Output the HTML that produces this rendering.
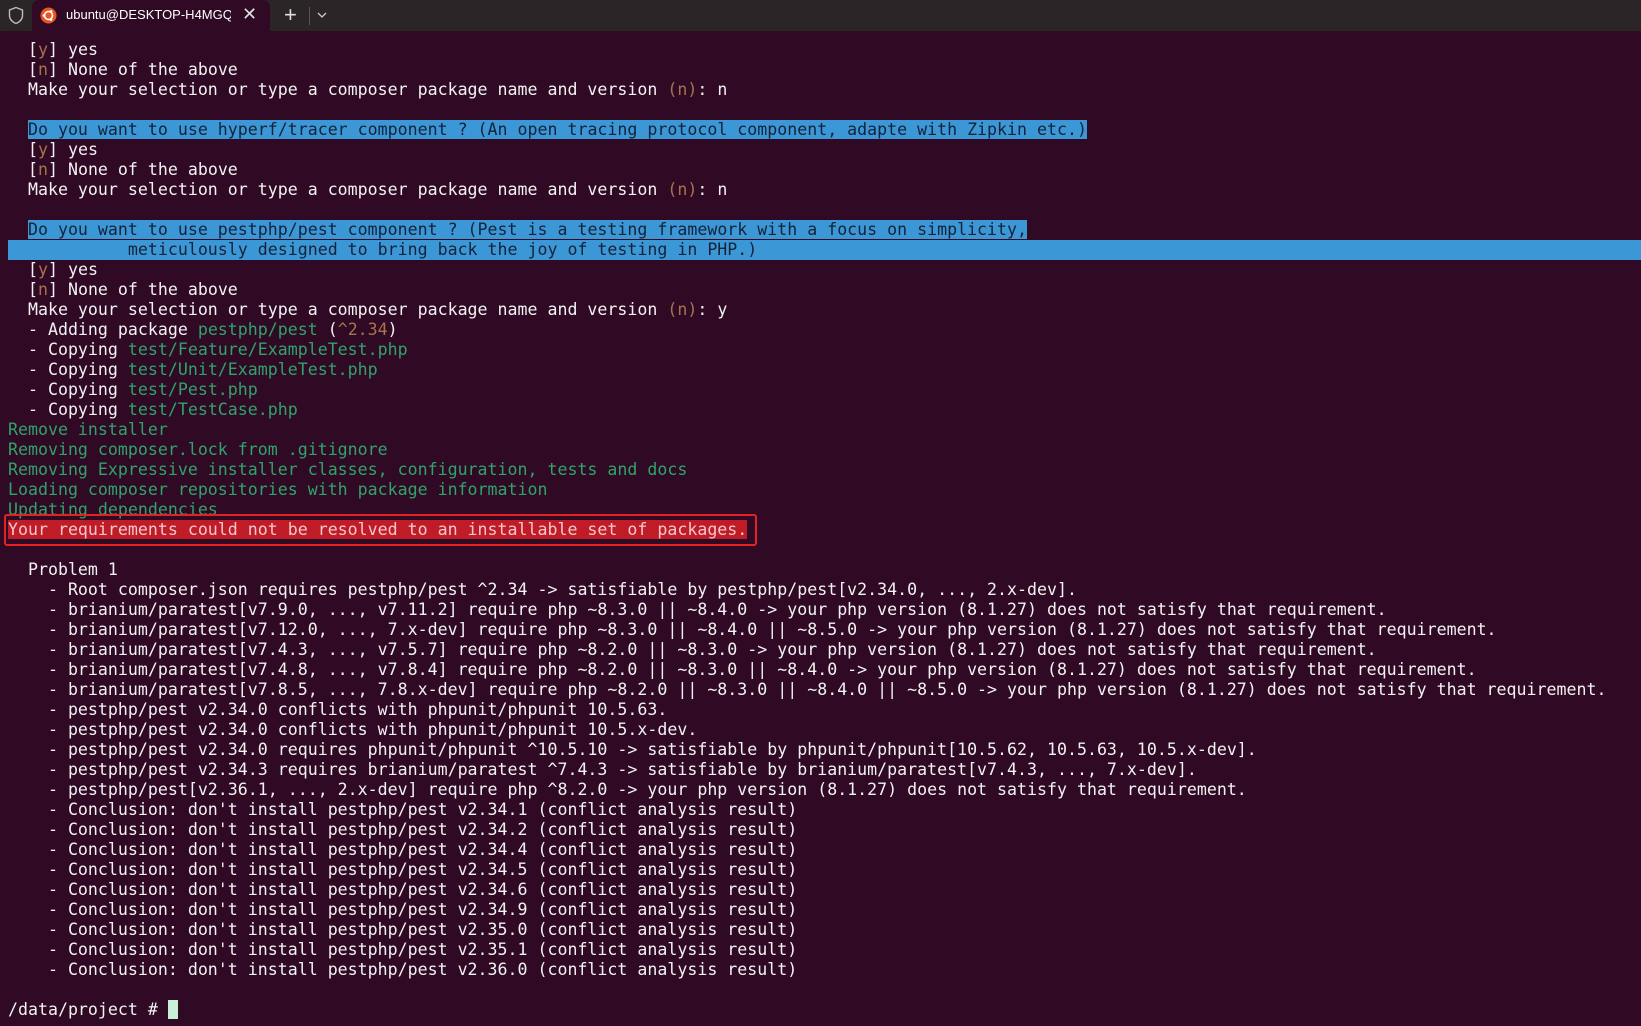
<!DOCTYPE html>
<html><head><meta charset="utf-8"><style>
*{margin:0;padding:0;box-sizing:border-box}
html,body{width:1641px;height:1026px;overflow:hidden}
body{background:#300a24;position:relative;font-family:"DejaVu Sans Mono","Liberation Mono",monospace;}
#bar{position:absolute;left:0;top:0;width:1641px;height:31px;background:#2b2528;}
#tab{position:absolute;left:32px;top:0;width:238px;height:31px;background:#300a24;border-radius:7px 7px 0 0;}
#term{position:absolute;left:8px;top:40px;font-size:16.6px;line-height:20px;color:#f2f2f2;}
.l{height:20px;white-space:pre}
.g{color:#2fa36b}.o{color:#a8734c}.h{background:#3c97d6;color:#13233a}
.r{background:#c01c28;color:#f4c6cc}
</style></head><body>
<div id="bar">
<svg style="position:absolute;left:7px;top:6px" width="18" height="19" viewBox="0 0 18 19"><path d="M9 1.5 L15.5 4 V9.5 C15.5 13.5 12.5 16 9 17.5 C5.5 16 2.5 13.5 2.5 9.5 V4 Z" fill="none" stroke="#bbb" stroke-width="1.4"/></svg>
<div id="tab"></div>
<svg style="position:absolute;left:40px;top:7px" width="17" height="17" viewBox="0 0 17 17"><circle cx="8.5" cy="8.5" r="8" fill="#e95420"/><circle cx="8.5" cy="8.5" r="4" fill="none" stroke="#fff" stroke-width="1.6"/><circle cx="4" cy="8.5" r="1.4" fill="#fff"/><circle cx="11" cy="4.5" r="1.4" fill="#fff"/><circle cx="11" cy="12.5" r="1.4" fill="#fff"/></svg>
<div style="position:absolute;left:66px;top:7px;font:13px 'Liberation Sans',sans-serif;color:#fff;width:165px;overflow:hidden;white-space:nowrap">ubuntu@DESKTOP-H4MGQIU:</div>
<div style="position:absolute;left:242px;top:4px;font:18px 'Liberation Sans',sans-serif;color:#ddd">✕</div>
<div style="position:absolute;left:284px;top:2px;font:22px 'Liberation Sans',sans-serif;color:#ddd">+</div>
<div style="position:absolute;left:309px;top:7px;width:1px;height:18px;background:#555"></div>
<svg style="position:absolute;left:317px;top:11px" width="10" height="8"><path d="M1 2 L5 6 L9 2" fill="none" stroke="#ccc" stroke-width="1.3"/></svg>
</div>
<div id="term"><div class="l">  [<span class="o">y</span>] yes</div><div class="l">  [<span class="o">n</span>] None of the above</div><div class="l">  Make your selection or type a composer package name and version <span class="o">(n)</span>: n</div><div class="l"> </div><div class="l">  <span class="h">Do you want to use hyperf/tracer component ? (An open tracing protocol component, adapte with Zipkin etc.)</span></div><div class="l">  [<span class="o">y</span>] yes</div><div class="l">  [<span class="o">n</span>] None of the above</div><div class="l">  Make your selection or type a composer package name and version <span class="o">(n)</span>: n</div><div class="l"> </div><div class="l">  <span class="h">Do you want to use pestphp/pest component ? (Pest is a testing framework with a focus on simplicity,</span></div><div class="l h" style="width:1633px">            meticulously designed to bring back the joy of testing in PHP.)</div><div class="l">  [<span class="o">y</span>] yes</div><div class="l">  [<span class="o">n</span>] None of the above</div><div class="l">  Make your selection or type a composer package name and version <span class="o">(n)</span>: y</div><div class="l">  - Adding package <span class="g">pestphp/pest</span> (<span class="o">^2.34</span>)</div><div class="l">  - Copying <span class="g">test/Feature/ExampleTest.php</span></div><div class="l">  - Copying <span class="g">test/Unit/ExampleTest.php</span></div><div class="l">  - Copying <span class="g">test/Pest.php</span></div><div class="l">  - Copying <span class="g">test/TestCase.php</span></div><div class="l g">Remove installer</div><div class="l g">Removing composer.lock from .gitignore</div><div class="l g">Removing Expressive installer classes, configuration, tests and docs</div><div class="l g">Loading composer repositories with package information</div><div class="l g">Updating dependencies</div><div class="l"><span class="r">Your requirements could not be resolved to an installable set of packages.</span></div><div class="l"> </div><div class="l">  Problem 1</div><div class="l">    - Root composer.json requires pestphp/pest ^2.34 -&gt; satisfiable by pestphp/pest[v2.34.0, ..., 2.x-dev].</div><div class="l">    - brianium/paratest[v7.9.0, ..., v7.11.2] require php ~8.3.0 || ~8.4.0 -&gt; your php version (8.1.27) does not satisfy that requirement.</div><div class="l">    - brianium/paratest[v7.12.0, ..., 7.x-dev] require php ~8.3.0 || ~8.4.0 || ~8.5.0 -&gt; your php version (8.1.27) does not satisfy that requirement.</div><div class="l">    - brianium/paratest[v7.4.3, ..., v7.5.7] require php ~8.2.0 || ~8.3.0 -&gt; your php version (8.1.27) does not satisfy that requirement.</div><div class="l">    - brianium/paratest[v7.4.8, ..., v7.8.4] require php ~8.2.0 || ~8.3.0 || ~8.4.0 -&gt; your php version (8.1.27) does not satisfy that requirement.</div><div class="l">    - brianium/paratest[v7.8.5, ..., 7.8.x-dev] require php ~8.2.0 || ~8.3.0 || ~8.4.0 || ~8.5.0 -&gt; your php version (8.1.27) does not satisfy that requirement.</div><div class="l">    - pestphp/pest v2.34.0 conflicts with phpunit/phpunit 10.5.63.</div><div class="l">    - pestphp/pest v2.34.0 conflicts with phpunit/phpunit 10.5.x-dev.</div><div class="l">    - pestphp/pest v2.34.0 requires phpunit/phpunit ^10.5.10 -&gt; satisfiable by phpunit/phpunit[10.5.62, 10.5.63, 10.5.x-dev].</div><div class="l">    - pestphp/pest v2.34.3 requires brianium/paratest ^7.4.3 -&gt; satisfiable by brianium/paratest[v7.4.3, ..., 7.x-dev].</div><div class="l">    - pestphp/pest[v2.36.1, ..., 2.x-dev] require php ^8.2.0 -&gt; your php version (8.1.27) does not satisfy that requirement.</div><div class="l">    - Conclusion: don't install pestphp/pest v2.34.1 (conflict analysis result)</div><div class="l">    - Conclusion: don't install pestphp/pest v2.34.2 (conflict analysis result)</div><div class="l">    - Conclusion: don't install pestphp/pest v2.34.4 (conflict analysis result)</div><div class="l">    - Conclusion: don't install pestphp/pest v2.34.5 (conflict analysis result)</div><div class="l">    - Conclusion: don't install pestphp/pest v2.34.6 (conflict analysis result)</div><div class="l">    - Conclusion: don't install pestphp/pest v2.34.9 (conflict analysis result)</div><div class="l">    - Conclusion: don't install pestphp/pest v2.35.0 (conflict analysis result)</div><div class="l">    - Conclusion: don't install pestphp/pest v2.35.1 (conflict analysis result)</div><div class="l">    - Conclusion: don't install pestphp/pest v2.36.0 (conflict analysis result)</div><div class="l"> </div><div class="l">/data/project # <span style="display:inline-block;width:10px;height:19px;background:#c8f0d8;vertical-align:-4px"></span></div></div>
<div style="position:absolute;left:4px;top:514px;width:753px;height:32px;border:2px solid #e52222;border-radius:3px"></div>
</body></html>
